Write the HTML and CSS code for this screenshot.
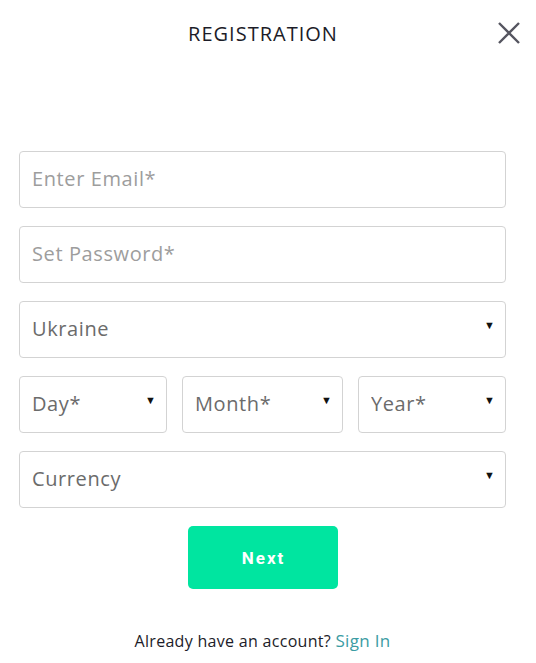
FILE: index.html
```html
<!DOCTYPE html>
<html lang="en">
<head>
  <meta charset="UTF-8" />
  <meta name="viewport" content="width=device-width, initial-scale=1.0" />
  <title>Registration</title>
  <link rel="stylesheet" href="styles.css">
</head>
<body>
  <div class="modal">
    <header class="modal-header">
      <h1 class="modal-title">REGISTRATION</h1>
      <button class="close-btn" aria-label="Close">
        <svg width="22" height="22" viewBox="0 0 22 22">
          <path d="M1 1 L21 21 M21 1 L1 21" stroke="#555560" stroke-width="2.4" fill="none" />
        </svg>
      </button>
    </header>

    <form class="reg-form">
      <input class="field" type="email" placeholder="Enter Email*">
      <input class="field" type="password" placeholder="Set Password*">

      <div class="select-wrap">
        <select class="field">
          <option>Ukraine</option>
        </select>
        <span class="arrow">▼</span>
      </div>

      <div class="date-row">
        <div class="select-wrap day">
          <select class="field"><option>Day*</option></select>
          <span class="arrow">▼</span>
        </div>
        <div class="select-wrap month">
          <select class="field"><option>Month*</option></select>
          <span class="arrow">▼</span>
        </div>
        <div class="select-wrap year">
          <select class="field"><option>Year*</option></select>
          <span class="arrow">▼</span>
        </div>
      </div>

      <div class="select-wrap">
        <select class="field"><option>Currency</option></select>
        <span class="arrow">▼</span>
      </div>

      <button type="button" class="next-btn">Next</button>
    </form>

    <p class="signin">Already have an account? <a href="#">Sign In</a></p>
  </div>
</body>
</html>
```

FILE: styles.css
```css
* {
  margin: 0;
  padding: 0;
  box-sizing: border-box;
}

body {
  font-family: "Open Sans", "Noto Sans", sans-serif;
  background: #fff;
  color: #222;
}

.modal {
  position: relative;
  width: 536px;
  padding: 0 30px 0 19px;
}

.modal-header {
  height: 66px;
  display: flex;
  align-items: center;
  justify-content: center;
}

.modal-title {
  font-size: 20px;
  font-weight: 400;
  color: #1c1c28;
  letter-spacing: 1px;
  margin-left: 1px;
}

.close-btn {
  position: absolute;
  top: 22px;
  right: 16px;
  background: none;
  border: none;
  cursor: pointer;
  line-height: 0;
}

.reg-form {
  margin-top: 85px;
  display: flex;
  flex-direction: column;
  gap: 18px;
}

.field {
  width: 100%;
  height: 57px;
  border: 1px solid #d3d3d3;
  border-radius: 4px;
  padding: 0 12px 3px;
  font-family: inherit;
  font-size: 20px;
  letter-spacing: 0.6px;
  color: #6b6b6b;
  background: #fff;
  outline: none;
  appearance: none;
  -webkit-appearance: none;
}

.field::placeholder {
  color: #9d9d9d;
}

.select-wrap {
  position: relative;
}

.arrow {
  position: absolute;
  top: 16px;
  right: 11px;
  font-size: 11px;
  color: #111;
  pointer-events: none;
}

.date-row {
  display: flex;
  gap: 15px;
}

.day, .year {
  width: 148px;
}

.month {
  flex: 1;
}

.next-btn {
  align-self: center;
  width: 150px;
  height: 63px;
  background: #00e5a0;
  color: #fff;
  border: none;
  border-radius: 5px;
  font-family: Roboto, sans-serif;
  font-weight: 700;
  font-size: 17px;
  letter-spacing: 2px;
  padding-left: 2px;
  cursor: pointer;
}

.signin {
  margin-top: 40px;
  text-align: center;
  font-size: 16px;
  letter-spacing: 0.3px;
  color: #1c1c28;
}

.signin a {
  color: #3b9ca3;
  font-size: 17px;
  text-decoration: none;
}
```
